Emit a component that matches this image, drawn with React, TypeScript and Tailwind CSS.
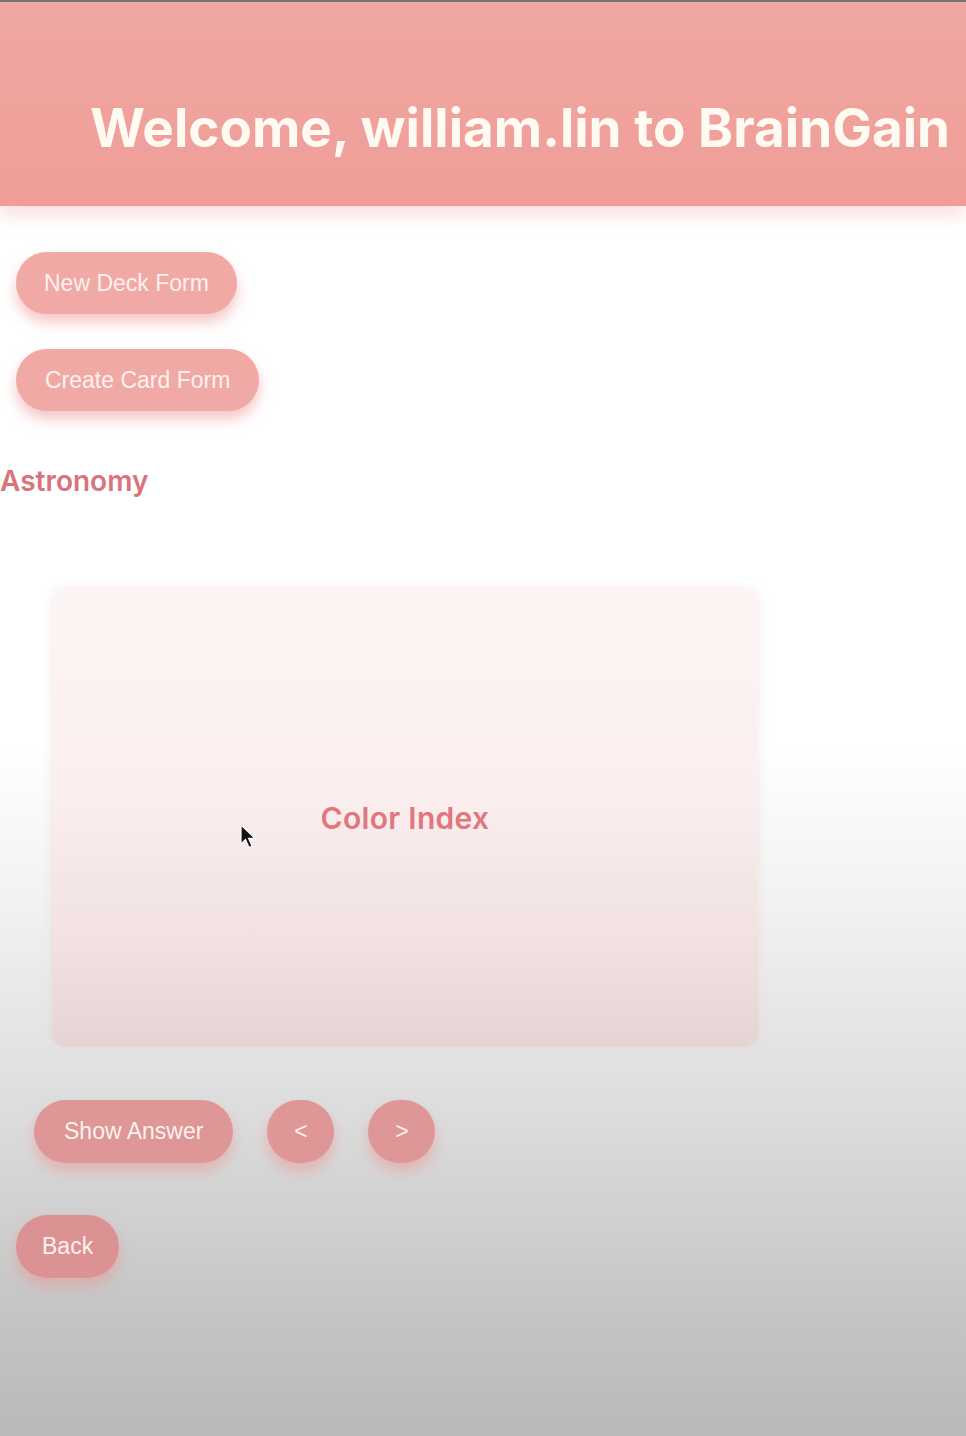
import React from 'react';

const pill =
  'rounded-full text-[23px] text-[#fdf1ef] font-["Liberation_Sans",Arial,sans-serif] shadow-[0_8px_14px_rgba(236,150,150,0.55)]';

const Cursor: React.FC = () => (
  <svg className="absolute left-[240px] top-[824px]" width="18" height="26" viewBox="0 0 18 26">
    <path d="M1 1 L1 20 L5.5 15.5 L9 23.5 L12 22 L8.6 14.3 L15 14.3 Z" fill="#111" stroke="#fff" strokeWidth="1.2" />
  </svg>
);

const App: React.FC = () => {
  return (
    <div className="relative min-h-[1436px] w-full bg-[linear-gradient(180deg,#ffffff_0%,#ffffff_52%,#f3f3f3_62%,#dcdcdc_78%,#c4c4c4_92%,#b9b9b9_100%)] font-['Inter',sans-serif]">
      <header className="h-[206px] border-t-2 border-[#7a7272] bg-[linear-gradient(180deg,#f0a7a2_0%,#f09d97_100%)] shadow-[0_10px_16px_rgba(240,170,165,0.35)] flex items-center pl-[90px] pt-[50px]">
        <h1 className="text-[53px] font-bold text-[#fffbf3] whitespace-nowrap">Welcome, william.lin to BrainGain</h1>
      </header>

      <div className="flex flex-col items-start gap-[35px] pl-[16px] pt-[46px]">
        <button className={`${pill} h-[62px] px-[28px] bg-[#f1a9a5]`}>New Deck Form</button>
        <button className={`${pill} h-[62px] px-[29px] bg-[#f1a9a5]`}>Create Card Form</button>
      </div>

      <h2 className="mt-[54px] text-[28px] font-semibold text-[#d9737c] leading-[32px]">Astronomy</h2>

      <div className="ml-[52px] mt-[92px] w-[706px] h-[458px] rounded-[14px] bg-[linear-gradient(180deg,#fdf5f5_0%,#fbeeee_45%,#f2e2e2_75%,#e4d4d4_100%)] shadow-[0_0_10px_rgba(230,210,210,0.5)] flex items-center justify-center">
        <span className="text-[30px] font-semibold tracking-[0.3px] text-[#e0777f]">Color Index</span>
      </div>

      <div className="flex items-center gap-[34px] pl-[34px] mt-[53px]">
        <button className={`${pill} h-[63px] px-[30px] bg-[#de9696]`}>Show Answer</button>
        <button className={`${pill} h-[63px] w-[67px] text-[20px] bg-[#de9696]`}>&lt;</button>
        <button className={`${pill} h-[63px] w-[67px] text-[20px] bg-[#de9696]`}>&gt;</button>
      </div>

      <div className="pl-[16px] mt-[52px]">
        <button className={`${pill} h-[63px] px-[26px] bg-[#dc9292]`}>Back</button>
      </div>

      <Cursor />
    </div>
  );
};

export default App;
